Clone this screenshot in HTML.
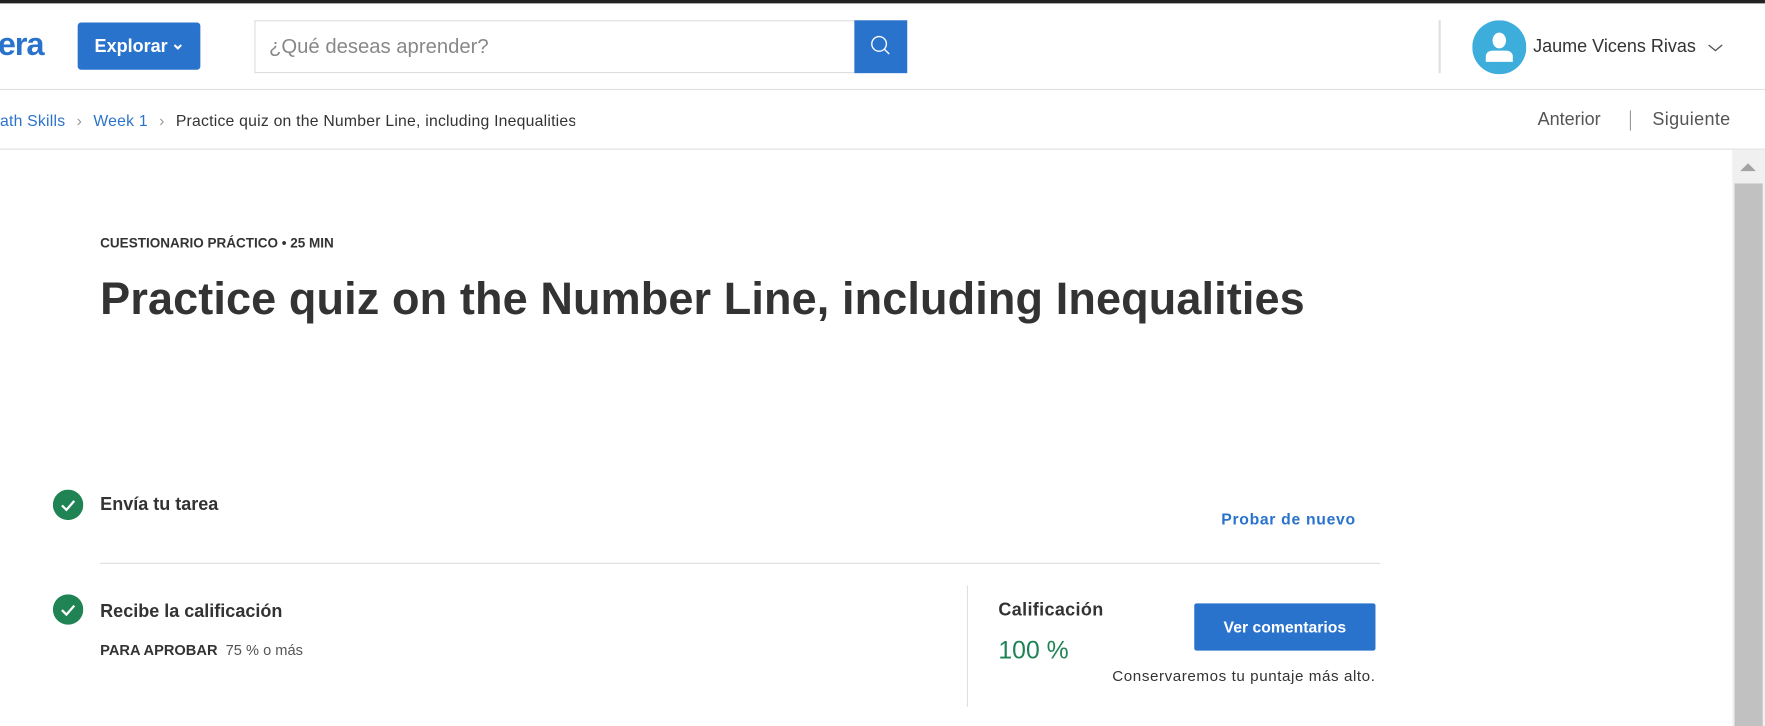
<!DOCTYPE html>
<html><head><meta charset="utf-8"><style>
html,body{margin:0;padding:0;width:1765px;height:726px;overflow:hidden;background:#fff;font-family:"Liberation Sans",Arial,sans-serif;}
#w{position:absolute;left:0;top:0;width:1568px;height:645px;transform:scale(1.1256);transform-origin:0 0;}
.a{position:absolute;white-space:nowrap;}
</style></head><body><div id="w">
<div class="a" style="left:0;top:0;width:1568px;height:3px;background:#222"></div>
<div class="a" style="left:0;top:79px;width:1568px;height:1px;background:#e0e0e0"></div>
<div class="a" style="left:-2px;top:24px;font-size:29px;font-weight:bold;color:#2a73cc;letter-spacing:-1px">era</div>
<div class="a" style="left:69px;top:20px;width:109px;height:42px;background:#2a73cc;border-radius:3px;color:#fff;font-weight:bold;font-size:16px;line-height:44px;"><span style="margin-left:15px">Explorar</span><svg width="10" height="8" style="margin-left:4px" viewBox="0 0 10 8"><path d="M2 2l3 3 3-3" stroke="#fff" stroke-width="1.8" fill="none"/></svg></div>
<div class="a" style="left:226px;top:18px;width:532px;height:45px;border:1px solid #ddd;border-right:none;"></div>
<div class="a" style="left:239px;top:31px;font-size:18px;color:#888">¿Qué deseas aprender?</div>
<div class="a" style="left:759px;top:18px;width:47px;height:47px;background:#2a73cc"><svg width="47" height="47" viewBox="0 0 47 47"><circle cx="22" cy="21" r="6.5" stroke="#fff" stroke-width="1.2" fill="none"/><path d="M26.5 25.5l4.5 4.5" stroke="#fff" stroke-width="1.2"/></svg></div>
<div class="a" style="left:1278px;top:18px;width:2px;height:47px;background:#e0e0e0"></div>
<svg class="a" style="left:1308px;top:18px" width="48" height="48" viewBox="0 0 48 48"><circle cx="24" cy="24" r="24" fill="#3daedc"/><ellipse cx="24" cy="18" rx="6" ry="7" fill="#fff"/><path d="M12 37v-5c0-3 3-5 6-5h12c3 0 6 2 6 5v5z" fill="#fff"/></svg>
<div class="a" style="left:1362px;top:33px;font-size:16px;color:#333">Jaume Vicens Rivas</div>
<svg class="a" style="left:1516px;top:38px" width="16" height="10" viewBox="0 0 16 10"><path d="M2 2l6 5 6-5" stroke="#555" stroke-width="1.2" fill="none"/></svg>
<div class="a" style="left:0;top:132px;width:1568px;height:1px;background:#e0e0e0"></div>
<div class="a" style="left:0;top:99px;font-size:14px;color:#333;width:511px;overflow:hidden;letter-spacing:0.2px"><span style="color:#2a73cc">ath Skills</span><span style="color:#999;margin:0 10px">›</span><span style="color:#2a73cc">Week 1</span><span style="color:#999;margin:0 10px">›</span>Practice quiz on the Number Line, including Inequalities</div>
<div class="a" style="left:1366px;top:98px;font-size:16px;color:#555">Anterior</div>
<div class="a" style="left:1448px;top:98px;width:1px;height:18px;background:#999"></div>
<div class="a" style="left:1468px;top:98px;font-size:16px;color:#555;letter-spacing:0.3px">Siguiente</div>
<div class="a" style="left:1539px;top:133px;width:29px;height:512px;background:#f0f0f0"></div>
<div class="a" style="left:1541px;top:163px;width:25px;height:482px;background:#c1c1c1"></div>
<svg class="a" style="left:1545px;top:143px" width="16" height="10"><path d="M1 9L8 2l7 7z" fill="#a3a3a3"/></svg>
<div class="a" style="left:89px;top:209px;font-size:12px;font-weight:bold;color:#333">CUESTIONARIO PRÁCTICO • 25 MIN</div>
<div class="a" style="left:89px;top:244px;font-size:40px;font-weight:bold;color:#333;letter-spacing:0.1px">Practice quiz on the Number Line, including Inequalities</div>
<svg class="a" style="left:47px;top:435px" width="27" height="27"><circle cx="13.5" cy="13.5" r="13.5" fill="#1f8354"/><path d="M8 14l4 4 7-8" stroke="#fff" stroke-width="2" fill="none"/></svg>
<div class="a" style="left:89px;top:440px;font-size:16px;font-weight:bold;color:#333">Envía tu tarea</div>
<div class="a" style="left:1085px;top:453px;font-size:14px;font-weight:bold;color:#2a73cc;letter-spacing:0.6px">Probar de nuevo</div>
<div class="a" style="left:89px;top:500px;width:1137px;height:1px;background:#ddd"></div>
<svg class="a" style="left:47px;top:528px" width="27" height="27"><circle cx="13.5" cy="13.5" r="13.5" fill="#1f8354"/><path d="M8 14l4 4 7-8" stroke="#fff" stroke-width="2" fill="none"/></svg>
<div class="a" style="left:89px;top:535px;font-size:16px;font-weight:bold;color:#333">Recibe la calificación</div>
<div class="a" style="left:89px;top:570px;font-size:13px;color:#555"><b style="color:#333">PARA APROBAR</b>&nbsp; 75 % o más</div>
<div class="a" style="left:859px;top:520px;width:1px;height:108px;background:#e0e0e0"></div>
<div class="a" style="left:887px;top:534px;font-size:16px;font-weight:bold;color:#333;letter-spacing:0.3px">Calificación</div>
<div class="a" style="left:887px;top:565px;font-size:22px;color:#1f8354">100 %</div>
<div class="a" style="left:1061px;top:536px;width:161px;height:42px;background:#2a73cc;border-radius:2px;color:#fff;font-size:14px;font-weight:bold;line-height:42px;text-align:center">Ver comentarios</div>
<div class="a" style="right:346px;top:593px;font-size:13.5px;color:#333;letter-spacing:0.5px">Conservaremos tu puntaje más alto.</div>
</div></body></html>
